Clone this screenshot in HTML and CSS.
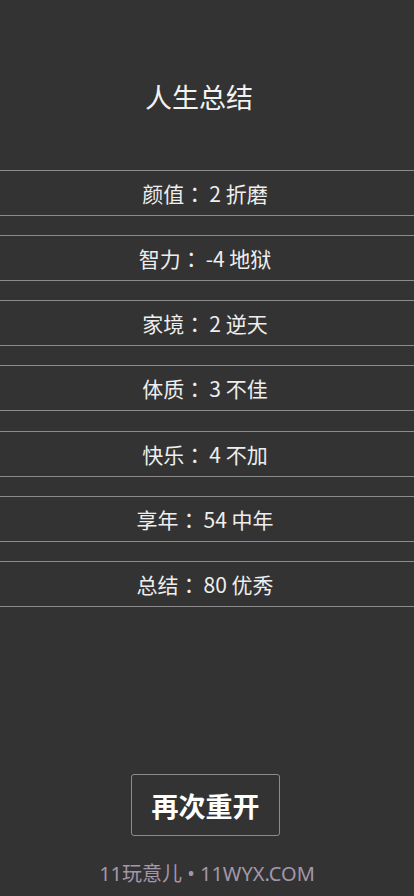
FILE: index.html
```html
<!DOCTYPE html>
<html lang="zh">
<head>
<meta charset="utf-8">
<link rel="stylesheet" href="styles.css">
</head>
<body>
<div class="page">
  <h1 class="title">人生总结</h1>
  <ul class="list">
    <li class="row">颜值<span class="colon">：</span>2 折磨</li>
    <li class="row">智力<span class="colon">：</span>-4 地狱</li>
    <li class="row">家境<span class="colon">：</span>2 逆天</li>
    <li class="row">体质<span class="colon">：</span>3 不佳</li>
    <li class="row">快乐<span class="colon">：</span>4 不加</li>
    <li class="row">享年<span class="colon">：</span>54 中年</li>
    <li class="row">总结<span class="colon">：</span>80 优秀</li>
  </ul>
  <div class="spacer"></div>
  <button class="restart">再次重开</button>
  <div class="footer">11玩意儿 • 11WYX.COM</div>
</div>
</body>
</html>
```
FILE: styles.css
```css
html, body {
  margin: 0;
  padding: 0;
  background: #333333;
}
body {
  font-family: "Noto Sans CJK SC", "Noto Sans", sans-serif;
  color: #eeeeee;
}
.page {
  width: 414px;
  height: 896px;
  display: flex;
  flex-direction: column;
  align-items: center;
  box-sizing: border-box;
  padding-top: 77px;
}
.title {
  margin: 0;
  padding-right: 16px;
  font-size: 27px;
  font-weight: normal;
  line-height: 40px;
  color: #f2f2f2;
}
.list {
  list-style: none;
  margin: 53px 0 0;
  padding: 0;
  width: 100%;
  display: flex;
  flex-direction: column;
  gap: 19.17px;
}
.row {
  border-top: 1px solid #8c8c8c;
  border-bottom: 1px solid #8c8c8c;
  height: 44px;
  display: flex;
  align-items: center;
  justify-content: center;
  padding-right: 4px;
  font-size: 21px;
  color: #eeeeee;
  white-space: pre;
}
.colon {
  font-family: "Noto Sans CJK TC", sans-serif;
  margin-right: 4px;
}
.spacer {
  flex: 1;
}
.restart {
  width: 149px;
  height: 62px;
  margin-right: 3px;
  background: transparent;
  border: 1px solid #8c8c8c;
  border-radius: 3px;
  color: #ffffff;
  font-family: "Noto Sans CJK SC", sans-serif;
  font-size: 27px;
  font-weight: bold;
  padding: 0;
}
.footer {
  margin-top: 24px;
  margin-bottom: 8px;
  font-family: "Noto Sans", "Noto Sans CJK SC", sans-serif;
  font-size: 20px;
  line-height: 28px;
  color: #a597ab;
}
```
